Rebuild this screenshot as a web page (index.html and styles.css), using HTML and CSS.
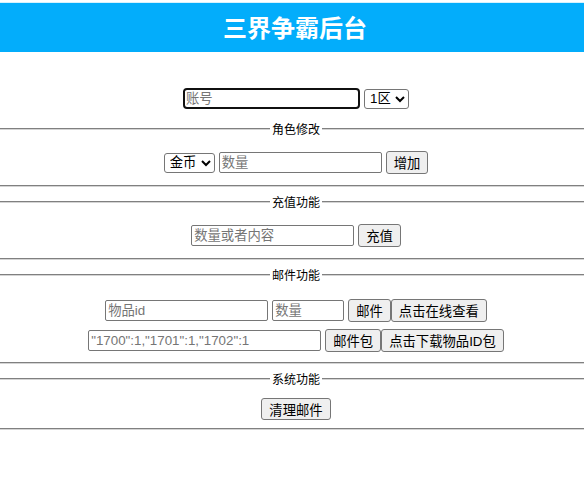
FILE: index.html
```html
<!DOCTYPE html>
<html lang="zh-CN">
<head>
<meta charset="utf-8">
<title>三界争霸后台</title>
<link rel="stylesheet" href="styles.css">
</head>
<body>
<header class="topbar"><h1 class="title">三界争霸后台</h1></header>
<main>
  <div class="row account-row">
    <input class="field field-account" type="text" placeholder="账号">
    <select class="pick pick-zone"><option>1区</option></select>
  </div>

  <fieldset class="panel">
    <legend class="panel-title">角色修改</legend>
    <div class="row">
      <select class="pick pick-coin"><option>金币</option></select>
      <input class="field" type="text" placeholder="数量">
      <button class="btn" type="button">增加</button>
    </div>
  </fieldset>

  <fieldset class="panel">
    <legend class="panel-title">充值功能</legend>
    <div class="row">
      <input class="field" type="text" placeholder="数量或者内容">
      <button class="btn" type="button">充值</button>
    </div>
  </fieldset>

  <fieldset class="panel panel-mail">
    <legend class="panel-title">邮件功能</legend>
    <div class="row">
      <input class="field" type="text" placeholder="物品id">
      <input class="field field-small" type="text" placeholder="数量">
      <span class="btn-group">
        <button class="btn" type="button">邮件</button><button class="btn" type="button">点击在线查看</button>
      </span>
    </div>
    <div class="row">
      <input class="field field-long" type="text" placeholder="&quot;1700&quot;:1,&quot;1701&quot;:1,&quot;1702&quot;:1">
      <span class="btn-group">
        <button class="btn" type="button">邮件包</button><button class="btn" type="button">点击下载物品ID包</button>
      </span>
    </div>
  </fieldset>

  <fieldset class="panel panel-system">
    <legend class="panel-title">系统功能</legend>
    <div class="row">
      <button class="btn btn-short" type="button">清理邮件</button>
    </div>
  </fieldset>
</main>
</body>
</html>
```

FILE: styles.css
```css
html, body {
  margin: 0;
  padding: 0;
  background: #ffffff;
}

body {
  font-family: "Liberation Sans", "Noto Sans CJK SC", sans-serif;
  font-size: 13.333px;
  color: #000000;
}

.topbar {
  box-sizing: border-box;
  margin-top: 2px;
  height: 50px;
  background: #03adfb;
  border-top: 1px solid #d6f1fd;
}

.title {
  margin: 0;
  padding-left: 6px;
  font-family: "Noto Sans CJK SC", sans-serif;
  font-size: 24px;
  font-weight: 700;
  line-height: 48px;
  color: #ffffff;
  text-align: center;
}

.row {
  display: flex;
  justify-content: center;
  align-items: center;
  gap: 4px;
  height: 23px;
}

.account-row {
  margin-top: 36px;
  padding-left: 8px;
  height: 21px;
}

.field {
  box-sizing: border-box;
  width: 163px;
  height: 21px;
  margin: 0;
  padding: 1px 2px;
  border: 1px solid #767676;
  border-radius: 2px;
  background: #ffffff;
  font-family: "Liberation Sans", "Noto Sans CJK SC", sans-serif;
  font-size: 13.333px;
  color: #000000;
  outline: none;
}

.field::placeholder {
  color: #757575;
}

.field-account {
  width: 177px;
  border: 2px solid #101010;
  border-radius: 4px;
  padding: 0 1px;
}

.field-small {
  width: 72px;
}

.field-long {
  width: 233px;
}

.pick {
  box-sizing: border-box;
  height: 20px;
  margin: 0;
  padding: 0 0 0 1px;
  border: 1px solid #767676;
  border-radius: 3px;
  background: #ffffff;
  font-family: "Liberation Sans", "Noto Sans CJK SC", sans-serif;
  font-size: 13.333px;
  color: #000000;
}

.pick-zone {
  width: 45px;
}

.pick-coin {
  width: 51px;
}

.btn {
  box-sizing: border-box;
  height: 23px;
  margin: 0;
  padding: 1px 7px;
  border: 1px solid #767676;
  border-radius: 3px;
  background: #efefef;
  font-family: "Liberation Sans", "Noto Sans CJK SC", sans-serif;
  font-size: 13.333px;
  color: #000000;
}

.btn-short {
  height: 22px;
}

.btn-group {
  display: flex;
}

.panel {
  margin: 13px 0 8px;
  padding: 15px 0 11px 8px;
  border: 0;
  border-top: 2px groove #d4d4d4;
  border-bottom: 2px groove #d4d4d4;
  min-width: 0;
}

.panel + .panel {
  margin-top: 0;
}

.panel-title {
  margin: 0 auto;
  padding: 0 2px;
  font-family: "Noto Sans CJK SC", sans-serif;
  font-size: 12px;
  line-height: 14px;
  color: #000000;
}

.panel-mail {
  padding-top: 17px;
  padding-bottom: 10px;
}

.panel-mail .row + .row {
  margin-top: 7px;
}

.panel-system {
  padding-top: 12px;
  padding-bottom: 8px;
}

.panel-system .row {
  height: 22px;
}
```
